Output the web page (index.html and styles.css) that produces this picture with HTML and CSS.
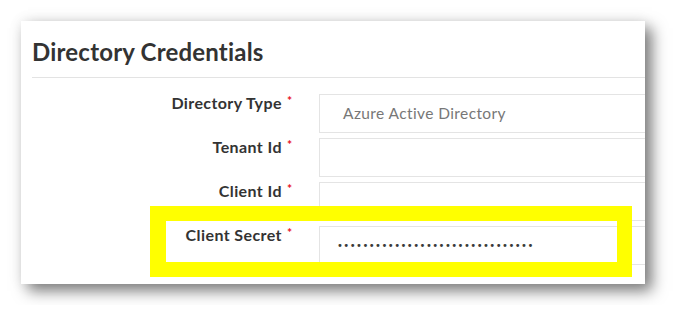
FILE: index.html
```html
<!DOCTYPE html>
<html lang="en">
  <head>
    <meta charset="UTF-8" />
    <meta name="viewport" content="width=device-width, initial-scale=1.0" />
    <title>Directory Credentials</title>
    <link rel="stylesheet" href="styles.css">
  </head>
  <body>
    <div class="page">
      <div class="card">
        <h2 class="card_title">Directory Credentials</h2>

        <div class="form_grid">
          <label class="field_label">Directory Type<span class="req">*</span></label>
          <div class="field_box"><span class="placeholder">Azure Active Directory</span></div>

          <label class="field_label">Tenant Id<span class="req">*</span></label>
          <div class="field_box"></div>

          <label class="field_label">Client Id<span class="req">*</span></label>
          <div class="field_box"></div>

          <label class="field_label">Client Secret<span class="req">*</span></label>
          <div class="field_box"><span class="secret">•••••••••••••••••••••••••••••••</span></div>
        </div>

        <!-- yellow callout drawn over the secret row -->
        <div class="highlight"></div>
      </div>
    </div>
  </body>
</html>
```

FILE: styles.css
```css
* {
  box-sizing: border-box;
}
body {
  margin: 0;
  background: #fff;
  font-family: "Lato", "Open Sans", sans-serif;
}
div.page {
  padding: 21px;
}
div.card {
  position: relative; /* the highlight sits on top of the rows */
  width: 624px;
  height: 263px;
  background: #fff;
  overflow: hidden;
  box-shadow: 7px 7px 14px rgba(0, 0, 0, 0.5), 0 0 14px rgba(0, 0, 0, 0.08);
}
h2.card_title {
  margin: 0 0 0 11px;
  padding: 17px 0 10px;
  font-size: 24px;
  font-weight: 700;
  line-height: 1.2;
  letter-spacing: 0.2px;
  color: #333;
  border-bottom: 1px solid #e3e3e3;
}
div.form_grid {
  display: grid;
  grid-template-columns: 275px 360px;
  grid-auto-rows: 39px;
  column-gap: 23px;
  row-gap: 5px;
  padding-top: 16px;
}
label.field_label {
  text-align: right;
  padding-right: 4px;
  font-size: 16px;
  font-weight: 700;
  line-height: 1.1;
  letter-spacing: 0.4px;
  color: #333;
}
span.req {
  color: #e8101a;
  font-size: 12px;
  margin-left: 5px;
  letter-spacing: 0;
  vertical-align: top;
}
div.field_box {
  border: 1px solid #e4e4e4;
  display: flex;
  align-items: center;
  padding-left: 23px;
}
span.placeholder {
  font-size: 15.5px;
  letter-spacing: 0.4px;
  color: #777;
}
span.secret {
  font-family: "DejaVu Sans", sans-serif;
  font-size: 10px;
  letter-spacing: 0.45px;
  color: #3a3a3a;
  margin-left: -6px;
}
div.highlight {
  position: absolute;
  left: 129px;
  top: 185px;
  width: 482px;
  height: 71px;
  border: 15px solid #ffff00;
  border-left-width: 16px;
}
```
